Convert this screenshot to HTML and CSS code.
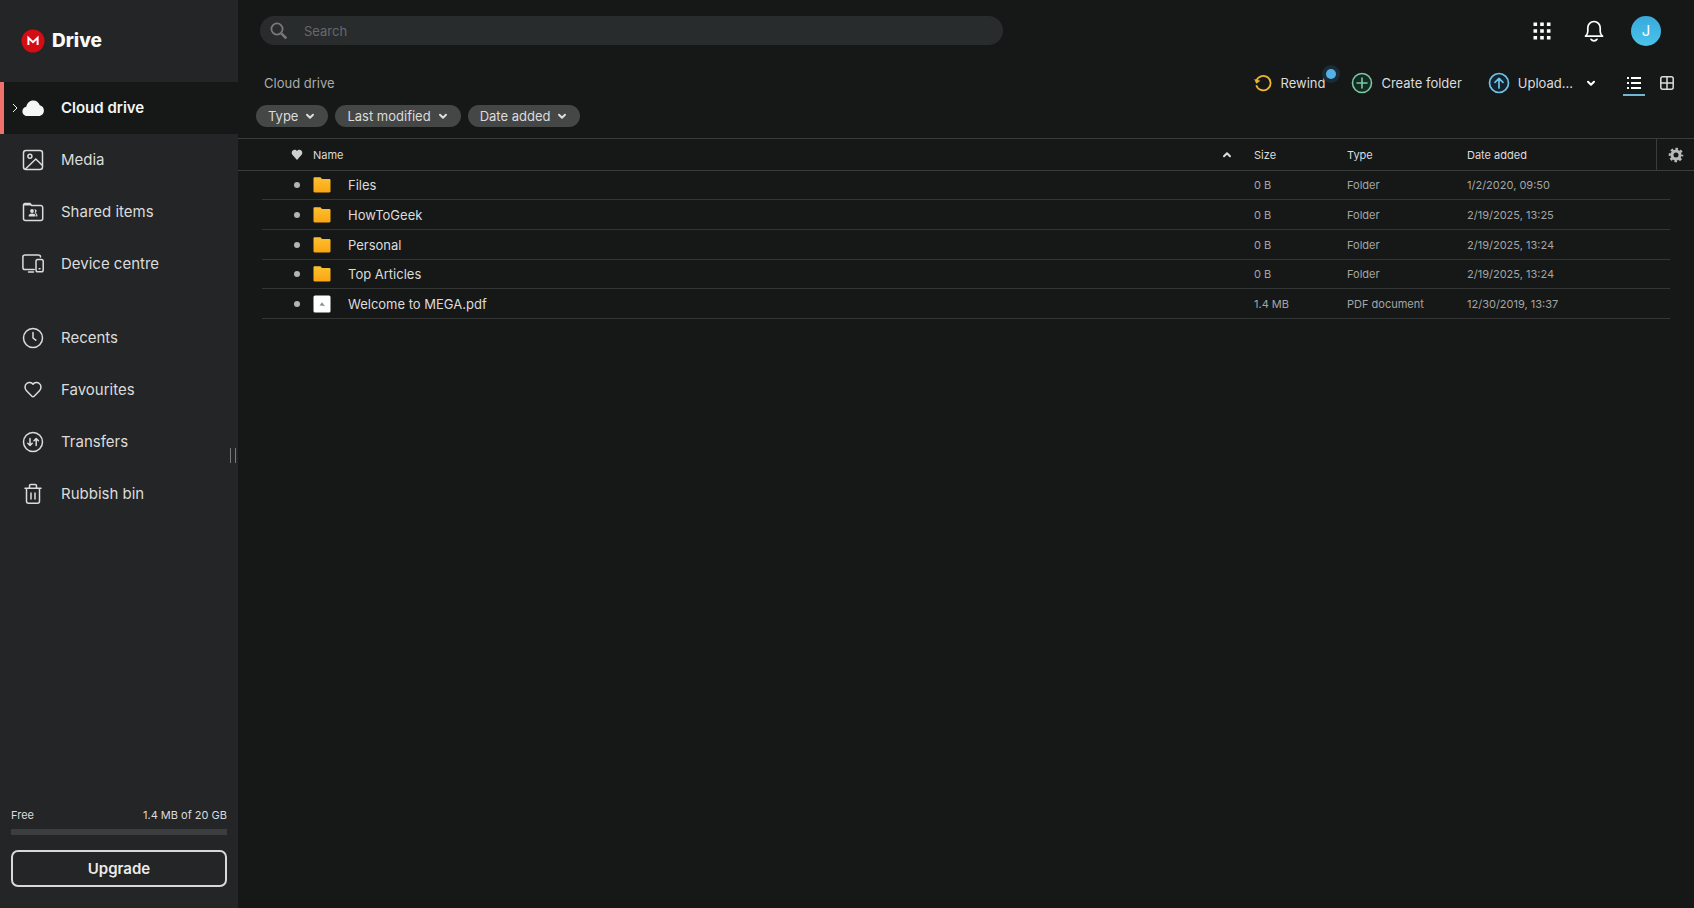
FILE: index.html
```html
<!DOCTYPE html>
<html lang="en">
<head>
<meta charset="utf-8">
<title>Cloud drive</title>
<meta name="viewport" content="width=device-width, initial-scale=1">
<link rel="stylesheet" href="styles.css">
</head>
<body>
<svg class="sprite" aria-hidden="true">
  <symbol id="folder" viewBox="0 0 18 18">
    <linearGradient id="folder-fill" x1="0" y1="0" x2="0" y2="1"><stop offset="0" stop-color="#fcc12f"/><stop offset="1" stop-color="#fba514"/></linearGradient>
    <path fill="url(#folder-fill)" d="M1.700 1.200h5.100c.4 0 .7.100.9.400l.8 1c.2.200.4.300.7.300h7.100c.7 0 1.200.5 1.200 1.200v11.200c0 .7-.5 1.200-1.200 1.200H1.700c-.7 0-1.200-.5-1.200-1.200V2.400c0-.7.5-1.200 1.200-1.200z"/>
  </symbol>
  <symbol id="chevron" viewBox="0 0 12 12"><path fill="none" stroke="currentColor" stroke-width="2" stroke-linecap="round" stroke-linejoin="round" d="M3 4.800l3 3 3-3"/></symbol>
</svg>
<div class="app">
  <aside class="sidebar">
    <a class="brand" href="#">
      <svg width="24" height="24" viewBox="0 0 24 24" aria-hidden="true"><circle cx="12" cy="12" r="11.500" fill="#d50c14"/><path d="M7.400 16V8.800l4.600 4.400 4.600-4.400V16" fill="none" stroke="#fff" stroke-width="2"/></svg>
      <span>Drive</span>
    </a>
    <nav class="nav">
      <a class="nav-item active" href="#">
        <svg class="expand" width="6" height="10" viewBox="0 0 6 10" aria-hidden="true"><path d="M1 1l4 4-4 4" fill="none" stroke="currentColor" stroke-width="1"/></svg>
        <svg width="24" height="24" viewBox="0 0 24 24" aria-hidden="true"><path fill="#f4f5f5" d="M6.500 20C3.500 20 1.400 18 1.400 15.400c0-2.300 1.600-4.200 3.900-4.600C5.900 7 8.700 4.400 12.200 4.400c3.100 0 5.700 2 6.600 4.900 2.400.5 4.100 2.600 4.100 5.200 0 3.200-2.300 5.500-5.300 5.500z"/></svg>
        <span>Cloud drive</span>
      </a>
      <a class="nav-item" href="#">
        <svg width="24" height="24" viewBox="0 0 24 24" fill="none" stroke="currentColor" stroke-width="1.500" aria-hidden="true"><rect x="2.500" y="2.500" width="19" height="19" rx="2.500"/><circle cx="8.900" cy="8.300" r="2"/><path d="M4.500 21l10.300-10 6.700 6.500"/></svg>
        <span>Media</span>
      </a>
      <a class="nav-item" href="#">
        <svg width="24" height="24" viewBox="0 0 24 24" aria-hidden="true"><path d="M2.500 5.500h7.600l-1.700-1.900H3.500c-.6 0-1 .4-1 1z" fill="currentColor"/><path d="M2.500 5v13.500c0 1.100.9 2 2 2h15.200c1.100 0 2-.9 2-2V7.500c0-1.100-.9-2-2-2h-9L9 3.600H4c-.8 0-1.500.6-1.500 1.400z" fill="none" stroke="currentColor" stroke-width="1.500"/><g fill="currentColor"><circle cx="11" cy="11" r="1.900"/><path d="M7.700 16.500v-1c0-1.400 1.900-2.100 3.400-2.100s3.400.7 3.400 2.100v1z"/><path d="M13.300 9.300c1.400-.2 2.300.7 2.300 1.700 0 .9-.5 1.500-1.200 1.800.8.500 2 1.200 2 2.600v1.100h-1.200v-1c0-1.200-.7-2-1.700-2.500.8-1 .8-2.500-.2-3.700z"/></g></svg>
        <span>Shared items</span>
      </a>
      <a class="nav-item" href="#">
        <svg width="24" height="24" viewBox="0 0 24 24" fill="none" stroke="currentColor" stroke-width="1.500" stroke-linecap="round" aria-hidden="true"><path d="M13.200 17.500H4c-1.200 0-2.100-.9-2.100-2.100V5.100C1.900 3.900 2.800 3 4 3h13.500c1.100 0 2 .8 2 2M7.500 20h5"/><rect x="15" y="7.500" width="7.200" height="12.200" rx="1.800"/><path d="M18.200 16.800h.8"/></svg>
        <span>Device centre</span>
      </a>
      <a class="nav-item group-start" href="#">
        <svg width="24" height="24" viewBox="0 0 24 24" fill="none" stroke="currentColor" stroke-width="1.500" stroke-linecap="round" aria-hidden="true"><circle cx="12" cy="12" r="9.500"/><path d="M12 6.500V12l2.800 2.200"/></svg>
        <span>Recents</span>
      </a>
      <a class="nav-item" href="#">
        <svg width="24" height="24" viewBox="0 0 24 24" fill="none" stroke="currentColor" stroke-width="1.500" stroke-linejoin="round" aria-hidden="true"><path d="M12 6.200C10.500 4.200 7.600 3.900 5.700 5.500c-2.200 1.900-2.200 5.200-.2 7.200l5.400 5.600c.6.600 1.600.6 2.200 0l5.400-5.600c2-2 2-5.300-.2-7.200-1.900-1.600-4.800-1.300-6.300.7z"/></svg>
        <span>Favourites</span>
      </a>
      <a class="nav-item" href="#">
        <svg width="24" height="24" viewBox="0 0 24 24" fill="none" stroke="currentColor" stroke-width="1.500" stroke-linecap="round" stroke-linejoin="round" aria-hidden="true"><circle cx="12" cy="12" r="9.500"/><path d="M9 8.500v7M6.800 13.300L9 15.500l2.200-2.200M15.200 15.500v-7M13 10.700l2.200-2.200 2.200 2.200"/></svg>
        <span>Transfers</span>
      </a>
      <a class="nav-item" href="#">
        <svg width="24" height="24" viewBox="0 0 24 24" fill="none" stroke="currentColor" stroke-width="1.500" stroke-linecap="round" aria-hidden="true"><path d="M4 6.200h16M8.500 6V3.800c0-.8.500-1.300 1.300-1.300h4.400c.8 0 1.300.5 1.300 1.300V6M5.500 6.500v12.700c0 1.100.9 2 2 2h9c1.100 0 2-.9 2-2V6.500M10 11v6M14 11v6"/></svg>
        <span>Rubbish bin</span>
      </a>
    </nav>
    <div class="storage">
      <div class="storage-text"><span>Free</span><span>1.4 MB of 20 GB</span></div>
      <div class="storage-bar"></div>
      <button class="upgrade" type="button">Upgrade</button>
    </div>
    <div class="resizer"></div>
  </aside>

  <main class="main">
    <header class="topbar">
      <label class="search">
        <svg width="18" height="18" viewBox="0 0 18 18" fill="none" stroke="currentColor" aria-hidden="true"><circle cx="7" cy="7" r="5.600" stroke-width="1.800"/><path d="M11.300 11.300l5 5" stroke-width="2.600"/></svg>
        <input type="search" placeholder="Search" aria-label="Search">
      </label>
      <div class="account">
        <button type="button" aria-label="Apps"><svg width="18" height="18" viewBox="0 0 18 18" fill="currentColor" aria-hidden="true"><path d="M.5.500h3.600v3.600H.5zM7.200.5h3.600v3.600H7.200zM13.900.5h3.600v3.600h-3.600zM.5 7.200h3.600v3.600H.5zM7.200 7.200h3.600v3.600H7.200zM13.900 7.200h3.600v3.600h-3.600zM.5 13.900h3.600v3.600H.5zM7.200 13.900h3.600v3.600H7.200zM13.900 13.900h3.600v3.600h-3.600z"/></svg></button>
        <button type="button" aria-label="Notifications"><svg width="20" height="22" viewBox="0 0 20 22" fill="none" stroke="currentColor" stroke-width="1.700" stroke-linecap="round" stroke-linejoin="round" aria-hidden="true"><path d="M1.500 16.200h17c-1.700-1.500-2.300-2.600-2.300-4.700V7.800C16.200 4.200 13.500 1.500 10 1.500S3.800 4.200 3.800 7.800v3.700c0 2.100-.6 3.200-2.300 4.700zM7 19.300c.7 1 1.700 1.500 3 1.500s2.300-.5 3-1.500"/></svg></button>
        <button class="avatar" type="button" aria-label="Account">J</button>
      </div>
    </header>

    <div class="toolbar">
      <a class="crumb" href="#">Cloud drive</a>
      <div class="actions">
        <button class="action rewind" type="button">
          <svg width="18" height="18" viewBox="0 0 18 18" fill="none" stroke="#eeb430" stroke-width="1.800" aria-hidden="true"><path d="M2.600 6.200A7.300 7.300 0 1 1 2.300 11.200"/><path d="M.2 5l6.200 1.700L2.300 9.800z" fill="#eeb430" stroke="none"/></svg>
          <span>Rewind</span><i class="badge"></i>
        </button>
        <button class="action create" type="button">
          <svg width="22" height="22" viewBox="0 0 22 22" fill="none" stroke="#7cc7a4" stroke-width="1.600" stroke-linecap="round" aria-hidden="true"><circle cx="11" cy="11" r="9.500" fill="#132a22"/><path d="M11 6v10M6 11h10"/></svg>
          <span>Create folder</span>
        </button>
        <button class="action upload" type="button">
          <svg width="22" height="22" viewBox="0 0 22 22" fill="none" stroke="#70c2e8" stroke-width="1.700" stroke-linecap="round" stroke-linejoin="round" aria-hidden="true"><circle cx="11" cy="11" r="9.500" fill="#13242e"/><path d="M11 16V6.500M7 10.300l4-4 4 4"/></svg>
          <span>Upload...</span>
          <svg class="caret" width="12" height="12" aria-hidden="true"><use href="#chevron"/></svg>
        </button>
        <button class="view selected" type="button" aria-label="List view"><svg width="16" height="12" viewBox="0 0 16 12" fill="currentColor" aria-hidden="true"><path d="M1 0h2v2H1zM5 0h10v2H5zM1 5h2v2H1zM5 5h10v2H5zM1 10h2v2H1zM5 10h10v2H5z"/></svg></button>
        <button class="view" type="button" aria-label="Grid view"><svg width="14" height="14" viewBox="0 0 14 14" fill="none" stroke="currentColor" stroke-width="1.500" aria-hidden="true"><rect x=".8" y=".8" width="12.400" height="12.400" rx="2"/><path d="M7 1v12M1 7h12"/></svg></button>
      </div>
    </div>

    <div class="filters">
      <button type="button">Type<svg width="12" height="12" aria-hidden="true"><use href="#chevron"/></svg></button>
      <button type="button">Last modified<svg width="12" height="12" aria-hidden="true"><use href="#chevron"/></svg></button>
      <button type="button">Date added<svg width="12" height="12" aria-hidden="true"><use href="#chevron"/></svg></button>
    </div>

    <table class="files">
      <colgroup><col class="c-pad"><col class="c-fav"><col><col class="c-size"><col class="c-type"><col class="c-date"><col class="c-end"><col class="c-pad"></colgroup>
      <thead>
        <tr>
          <th></th>
          <th class="fav"><svg width="12" height="12" viewBox="0 0 12 12" aria-label="Favourite"><path fill="#cfcfcf" d="M6 2.100C5 .6 2.900.5 1.700 1.600.5 2.700.4 4.600 1.400 5.800L6 11l4.600-5.200c1-1.200.9-3.100-.3-4.200C9.100.5 7 .6 6 2.100z"/></svg></th>
          <th><div class="name-head">Name<svg class="sort" width="12" height="12" aria-hidden="true"><use href="#chevron"/></svg></div></th>
          <th>Size</th><th>Type</th><th>Date added</th>
          <th class="settings" colspan="2"><button type="button" aria-label="Column settings"><svg width="16" height="16" viewBox="0 0 16 16" aria-hidden="true"><circle cx="8" cy="8" r="4" fill="none" stroke="#b9b9b9" stroke-width="3"/><circle cx="8" cy="8" r="6" fill="none" stroke="#b9b9b9" stroke-width="2.600" stroke-dasharray="2.500 2.212" stroke-dashoffset="1.250"/></svg></button></th>
        </tr>
      </thead>
      <tbody>
        <tr><td></td><td class="fav"><i class="dot"></i></td><td><a class="name" href="#"><svg width="18" height="18" aria-hidden="true"><use href="#folder"/></svg>Files</a></td><td>0 B</td><td>Folder</td><td>1/2/2020, 09:50</td><td></td><td></td></tr>
        <tr><td></td><td class="fav"><i class="dot"></i></td><td><a class="name" href="#"><svg width="18" height="18" aria-hidden="true"><use href="#folder"/></svg>HowToGeek</a></td><td>0 B</td><td>Folder</td><td>2/19/2025, 13:25</td><td></td><td></td></tr>
        <tr><td></td><td class="fav"><i class="dot"></i></td><td><a class="name" href="#"><svg width="18" height="18" aria-hidden="true"><use href="#folder"/></svg>Personal</a></td><td>0 B</td><td>Folder</td><td>2/19/2025, 13:24</td><td></td><td></td></tr>
        <tr><td></td><td class="fav"><i class="dot"></i></td><td><a class="name" href="#"><svg width="18" height="18" aria-hidden="true"><use href="#folder"/></svg>Top Articles</a></td><td>0 B</td><td>Folder</td><td>2/19/2025, 13:24</td><td></td><td></td></tr>
        <tr><td></td><td class="fav"><i class="dot"></i></td><td><a class="name" href="#"><svg width="18" height="18" viewBox="0 0 18 18" aria-hidden="true"><rect x=".5" y=".5" width="17" height="17" rx="1.500" fill="#fff"/><path d="M6.500 10.500L9 7.300l3 3.900-2.400-.5z" fill="#8f8f8f"/></svg>Welcome to MEGA.pdf</a></td><td>1.4 MB</td><td>PDF document</td><td>12/30/2019, 13:37</td><td></td><td></td></tr>
      </tbody>
    </table>
  </main>
</div>
</body>
</html>
```

FILE: styles.css
```css
* { box-sizing: border-box; }

body {
  margin: 0;
  background: #161817;
  color: #dcdcdc;
  font: 13px/20px Inter, "Liberation Sans", sans-serif;
}

a { color: inherit; text-decoration: none; }

button {
  padding: 0;
  border: 0;
  background: none;
  color: inherit;
  font: inherit;
  cursor: pointer;
}

svg { display: block; flex: none; }

.sprite { position: absolute; width: 0; height: 0; }

.app { display: flex; min-height: 100vh; }

/* Sidebar */
.sidebar {
  position: relative;
  display: flex;
  flex: none;
  flex-direction: column;
  width: 238px;
  background: #232526;
}

.brand {
  display: flex;
  align-items: center;
  gap: 7px;
  height: 82px;
  padding-left: 21px;
  color: #fafafa;
  font-size: 19px;
  font-weight: 800;
}

.nav-item {
  position: relative;
  display: flex;
  align-items: center;
  gap: 16px;
  height: 52px;
  padding-left: 21px;
  font-size: 15px;
}

.nav-item.active {
  border-left: 4px solid #f0706c;
  padding-left: 17px;
  background: #161817;
  color: #f5f5f5;
  font-weight: 600;
}

.expand { position: absolute; left: 8px; }

.group-start { margin-top: 22px; }

.storage {
  margin-top: auto;
  padding: 0 11px 21px;
}

.storage-text {
  display: flex;
  justify-content: space-between;
  font-size: 11px;
  line-height: 16px;
}

.storage-bar {
  height: 6px;
  margin: 6px 0 15px;
  background: #3c3d3e;
}

.upgrade {
  width: 100%;
  height: 37px;
  border: 2px solid #d8d8d8;
  border-radius: 7px;
  color: #ececec;
  font-size: 15px;
  font-weight: 600;
}

.resizer {
  position: absolute;
  right: 2px;
  top: 50%;
  width: 6px;
  height: 15px;
  margin-top: -6px;
  border: solid #77797a;
  border-width: 0 1px;
}

/* Main column */
.main { flex: 1; min-width: 0; }

.topbar {
  display: flex;
  align-items: center;
  justify-content: space-between;
  height: 61px;
  padding: 0 33px 0 22px;
}

.search {
  display: flex;
  align-items: center;
  gap: 16px;
  width: 53%;
  height: 29px;
  padding-left: 10px;
  border-radius: 15px;
  background: #292c2d;
  color: #77797a;
}

.search input {
  flex: 1;
  min-width: 0;
  padding: 0;
  border: 0;
  outline: 0;
  background: none;
  color: #dcdcdc;
  font: inherit;
}

.search input::placeholder { color: #66696a; opacity: 1; }

.account { display: flex; align-items: center; gap: 33px; color: #fff; }

.avatar {
  width: 30px;
  height: 30px;
  margin-left: -6px;
  border-radius: 50%;
  background: linear-gradient(#38a9dc, #4ac4ea);
  font-size: 15px;
}

.toolbar {
  display: flex;
  align-items: center;
  justify-content: space-between;
  height: 43px;
  padding: 0 20px 0 26px;
}

.crumb { color: #a9abaa; }

.actions, .action { display: flex; align-items: center; }

.action { position: relative; gap: 8px; }

.create { margin-left: 26px; }
.upload { margin-left: 26px; }
.caret { margin-left: 4px; color: #fff; }

.badge {
  position: absolute;
  right: -11px;
  top: -4px;
  width: 10px;
  height: 10px;
  border-radius: 50%;
  background: #55b2e8;
  box-shadow: 0 0 0 4px #1a2c38;
}

.view {
  display: flex;
  align-items: center;
  justify-content: center;
  height: 26px;
  margin-left: 15px;
}

.view.selected {
  width: 22px;
  margin-left: 26px;
  border: solid transparent;
  border-width: 2px 0;
  border-bottom-color: #70b8d0;
  color: #fff;
}

.filters { display: flex; gap: 7px; padding: 1px 18px 11px; }

.filters button {
  display: flex;
  align-items: center;
  gap: 6px;
  height: 22px;
  padding: 0 12px;
  border-radius: 11px;
  background: #454646;
}

/* File list */
.files {
  width: 100%;
  border-spacing: 0;
  table-layout: fixed;
  font-size: 11px;
  line-height: 16px;
}

.c-pad { width: 24px; }
.c-fav { width: 51px; }
.c-size { width: 93px; }
.c-type { width: 120px; }
.c-date { width: 189px; }
.c-end { width: 14px; }

.files th, .files td { padding: 0; text-align: left; }

.files th {
  height: 33px;
  border: solid #3a3c3b;
  border-width: 1px 0;
  font-weight: 400;
}

.files .settings { border-left-width: 1px; }
.settings button { display: block; margin: 0 auto; }

.files td {
  height: 30px;
  border-bottom: 1px solid #343635;
  color: #a4a6a5;
}

.files tbody tr:nth-child(3n + 1) td { height: 29px; }

.files td:first-child, .files td:last-child { border-bottom-color: transparent; }

.files .fav { padding-left: 29px; }

.dot {
  display: block;
  width: 6px;
  height: 6px;
  margin-left: 3px;
  border-radius: 50%;
  background: #b4b4b4;
}

.name-head {
  display: flex;
  align-items: center;
  justify-content: space-between;
  padding-right: 21px;
}

.sort { transform: rotate(180deg); }

.name {
  display: flex;
  align-items: center;
  gap: 17px;
  color: #dcdcdc;
  font-size: 13px;
}
```
